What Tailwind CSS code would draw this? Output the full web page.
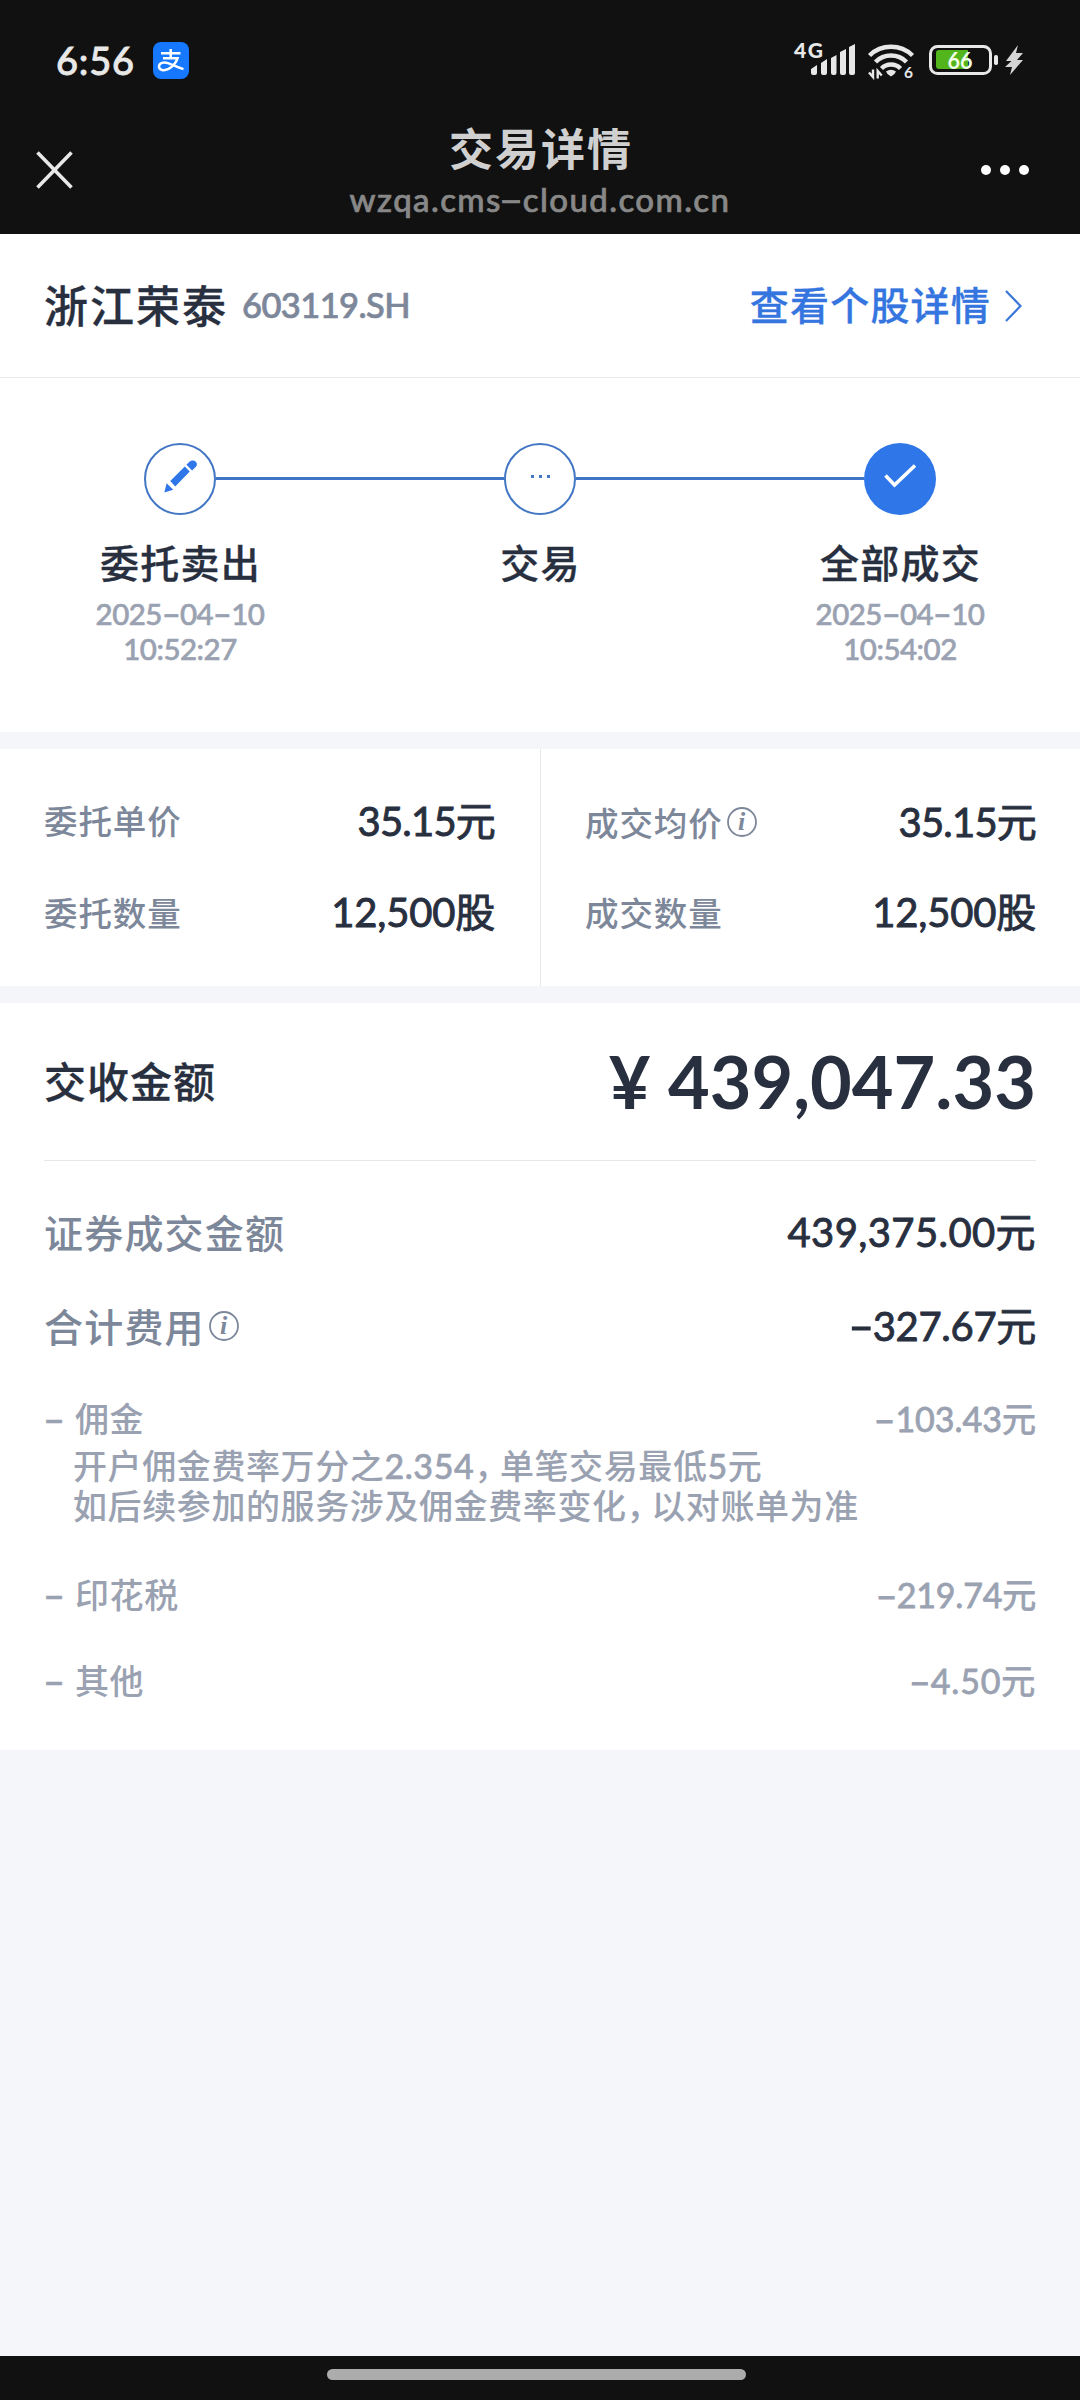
<!DOCTYPE html>
<html lang="zh-CN">
<head>
<meta charset="utf-8">
<title>交易详情</title>
<script src="https://cdn.jsdelivr.net/npm/@tailwindcss/browser@4"></script>
</head>
<body class="bg-[#f4f6fa]">
<div class="w-[1080px] h-[2400px] flex flex-col overflow-hidden bg-[#f4f6fa] text-[#282f3f] font-medium font-['Lato','Noto_Sans_CJK_SC',sans-serif] whitespace-nowrap">

  <header class="h-[234px] bg-[#111111] flex flex-col shrink-0">
    <div class="h-[121px] pl-[56px] pr-[56px] flex items-center justify-between">
      <div class="flex items-center gap-[19px]">
        <span class="text-[38px] leading-none text-[#e8e8e8] w-[78px] tracking-[0.800px] pb-[2px] [-webkit-text-stroke:0.800px]">6:56</span>
        <svg width="36" height="37" viewBox="0 0 36 37">
          <rect width="36" height="37" rx="8" fill="#1677ff"/>
          <path d="M8 11.300h19.500M17.700 7v9.500M10 16.300h14.500c-1.500 4.500-5 8.300-9 10.600-4.500 2.300-9.500 1.200-9.500-2.400 0-4 5-4.600 9-3.400 4.800 1.600 9.500 4.600 15.500 6" fill="none" stroke="#fff" stroke-width="2.500"/>
        </svg>
      </div>
      <svg width="236" height="60" viewBox="788 31 236 60" fill="#e8e8e8">
        <text x="794" y="58" font-size="21" font-weight="900" textLength="29">4G</text>
        <path d="M811 75v-4l6-4v8q0 2-2 2h-2q-2 0-2-2zM821 75V65l6-4v14q0 2-2 2h-2q-2 0-2-2zM831 75V60l5.500-3v18q0 2-2 2h-1.500q-2 0-2-2zM840 75V54l6-3v24q0 2-2 2h-2q-2 0-2-2zM849 75V49l6-3v29q0 2-2 2h-2q-2 0-2-2z" transform="translate(0 -2)"/>
        <g fill="none" stroke="#e8e8e8" stroke-width="4.500">
          <path d="M869.500 55.500a31 31 0 0 1 43 0M875.500 62a22 22 0 0 1 31 0M881.500 68.500a13.500 13.500 0 0 1 19 0"/>
        </g>
        <path d="M886 71.500q5-3.500 10 0-1 3-5 5-4-2-5-5z"/>
        <path d="M873 69.500v7.500l-4-4.500M877.700 78.500v-7.500l4 4.500" fill="none" stroke="#e8e8e8" stroke-width="2.400"/>
        <text x="904" y="77.500" font-size="15.500" font-weight="700">6</text>
        <rect x="930.500" y="46.500" width="60" height="27" rx="7" fill="none" stroke="#e8e8e8" stroke-width="3"/>
        <path d="M939 50h29v19h-29q-3 0-3-3V53q0-3 3-3z" fill="#52b51c"/>
        <text x="947.500" y="69" font-size="23.500" font-weight="700" fill="#f2ffe9" textLength="25" lengthAdjust="spacingAndGlyphs">66</text>
        <rect x="994" y="55" width="4" height="10" rx="1.800"/>
        <path d="M1018 45l-12 16h5.500l-6.500 6h7l-2 8 13-15h-6l6-7h-7z" fill="#d5d5d5"/>
      </svg>
    </div>
    <div class="h-[113px] grid grid-cols-[1fr_auto_1fr] pl-[36px] pr-[51px]">
      <svg class="mt-[30px]" width="37" height="38" viewBox="0 0 37 38"><path d="M1.500 1.500l34 35M35.500 1.500l-34 35" stroke="#e8e8e8" stroke-width="3.600"/></svg>
      <div class="flex flex-col items-center pl-[15px]">
        <h1 class="text-[44px] leading-[56px] pl-[2px] tracking-[2px] font-bold text-[#d0d0d0]">交易详情</h1>
        <div class="text-[33px] leading-[44px] tracking-[1.400px] text-[#888888] [-webkit-text-stroke:0.700px]">wzqa.cms<span class="inline-block w-[21px] text-center scale-x-200">-</span>cloud.com.cn</div>
      </div>
      <div class="flex gap-[9px] justify-end items-center h-[98px]">
        <i class="size-[10px] rounded-full bg-white"></i><i class="size-[10px] rounded-full bg-white"></i><i class="size-[10px] rounded-full bg-white"></i>
      </div>
    </div>
  </header>

  <section class="h-[144px] shrink-0 bg-white border-b border-[#e8e8ea] flex items-center justify-between pl-[44px] pr-[58px]">
    <div class="flex items-center gap-[14px]">
      <h2 class="text-[44px] leading-none tracking-[2px] [-webkit-text-stroke:0.300px]">浙江荣泰</h2>
      <span class="text-[34.500px] leading-none tracking-[-0.600px] text-[#7d879a] [-webkit-text-stroke:0.700px]">603119.SH</span>
    </div>
    <a class="flex items-center gap-[14px] text-[#3575e0]">
      <span class="text-[39px] leading-none tracking-[1.200px] [-webkit-text-stroke:0.300px]">查看个股详情</span>
      <svg width="17" height="32" viewBox="0 0 17 32"><path d="M1 1l14.500 15L1 31" fill="none" stroke="#3c78d8" stroke-width="2.200"/></svg>
    </a>
  </section>

  <section class="h-[354px] shrink-0 bg-white pt-[65px]">
    <div class="flex items-center px-[144px]">
      <div class="size-[72px] rounded-full border-2 border-[#4377c4] flex items-center justify-center">
        <svg width="33" height="34" viewBox="86 70 100 102" fill="#2f76e8" class="mb-[7px]"><path d="M87 171l7-28 20 20zM105 136l44-44 15 15-44 46zM154 87l9-9c14-12 30 4 19 16l-11 10z"/></svg>
      </div>
      <div class="flex-1 h-[3px] -mt-px bg-[#3f75c6]"></div>
      <div class="size-[72px] rounded-full border-2 border-[#4377c4] flex items-center justify-center gap-[5px] pb-[6px]">
        <i class="size-[3px] bg-[#4377c4]"></i><i class="size-[3px] bg-[#4377c4]"></i><i class="size-[3px] bg-[#4377c4]"></i>
      </div>
      <div class="flex-1 h-[3px] -mt-px bg-[#3f75c6]"></div>
      <div class="size-[72px] rounded-full bg-[#2f76e8] flex items-center justify-center">
        <svg width="34" height="26" viewBox="0 0 34 26" class="mb-[6px]"><path d="M2.500 12.500l9 9.500L32 2.500" fill="none" stroke="#fff" stroke-width="3.600"/></svg>
      </div>
    </div>
    <div class="grid grid-cols-3 text-center pt-[25px]">
      <div>
        <div class="pl-[1px] text-[39px] leading-[47px] tracking-[1.200px] [-webkit-text-stroke:0.300px]">委托卖出</div>
        <div class="text-[29.500px] leading-[35px] tracking-[-0.500px] text-[#9aa2b2] pt-[9px] [-webkit-text-stroke:0.600px]">2025<span class="inline-block w-[18px] text-center scale-x-175">-</span>04<span class="inline-block w-[18px] text-center scale-x-175">-</span>10<br>10:52:27</div>
      </div>
      <div class="pl-[1px] text-[39px] leading-[47px] tracking-[1.200px] [-webkit-text-stroke:0.300px]">交易</div>
      <div>
        <div class="pl-[1px] text-[39px] leading-[47px] tracking-[1.200px] [-webkit-text-stroke:0.300px]">全部成交</div>
        <div class="text-[29.500px] leading-[35px] tracking-[-0.500px] text-[#9aa2b2] pt-[9px] [-webkit-text-stroke:0.600px]">2025<span class="inline-block w-[18px] text-center scale-x-175">-</span>04<span class="inline-block w-[18px] text-center scale-x-175">-</span>10<br>10:54:02</div>
      </div>
    </div>
  </section>

  <section class="mt-[17px] h-[237px] shrink-0 bg-white grid grid-cols-2">
    <div class="pl-[44px] pr-[45px] pt-[27px]">
      <div class="h-[92px] flex items-center justify-between"><span class="text-[33.500px] leading-none tracking-[0.900px] text-[#7d879a]">委托单价</span><span class="text-[40px] leading-none font-normal tracking-[-0.800px] pb-[3px] [-webkit-text-stroke:0.900px]">35.15元</span></div>
      <div class="h-[92px] flex items-center justify-between"><span class="text-[33.500px] leading-none tracking-[0.900px] text-[#7d879a]">委托数量</span><span class="text-[40px] leading-none font-normal tracking-[-0.200px] pb-[4px] [-webkit-text-stroke:0.900px]">12,500股</span></div>
    </div>
    <div class="border-l border-[#e8e8ea] pl-[44px] pr-[44px] pt-[27px]">
      <div class="h-[92px] pt-[3px] flex items-center justify-between"><span class="flex items-center gap-[4px] text-[33.500px] leading-none tracking-[0.900px] text-[#7d879a]">成交均价<svg width="30" height="30" viewBox="0 0 30 30" class="-mt-[3px]"><circle cx="15" cy="15" r="14" fill="none" stroke="#7d879a" stroke-width="1.800"/><text x="11" y="23" font-family="Liberation Serif" font-style="italic" font-weight="700" font-size="26" fill="#7d879a">i</text></svg></span><span class="text-[40px] leading-none font-normal tracking-[-0.800px] pb-[3px] [-webkit-text-stroke:0.900px]">35.15元</span></div>
      <div class="h-[92px] flex items-center justify-between"><span class="text-[33.500px] leading-none tracking-[0.900px] text-[#7d879a]">成交数量</span><span class="text-[40px] leading-none font-normal tracking-[-0.200px] pb-[4px] [-webkit-text-stroke:0.900px]">12,500股</span></div>
    </div>
  </section>

  <section class="mt-[17px] h-[747px] shrink-0 bg-white px-[44px]">
    <div class="h-[158px] border-b border-[#e8e8ea] flex items-center justify-between">
      <span class="text-[42px] leading-none tracking-[1px] [-webkit-text-stroke:0.300px]">交收金额</span>
      <span class="text-[72px] leading-none font-bold pb-[2px]">¥ 439,047.33</span>
    </div>
    <div class="mt-[25px] h-[94px] flex items-center justify-between">
      <span class="text-[39px] leading-none tracking-[1.200px] text-[#7d879a]">证券成交金额</span>
      <span class="text-[40px] leading-none font-normal tracking-[0.400px] pb-[2px] [-webkit-text-stroke:0.900px]">439,375.00元</span>
    </div>
    <div class="h-[94px] flex items-center justify-between">
      <span class="flex items-center gap-[4px] text-[39px] leading-none tracking-[1.200px] text-[#7d879a]">合计费用<svg width="30" height="30" viewBox="0 0 30 30" class="-mt-[2px]"><circle cx="15" cy="15" r="14" fill="none" stroke="#7d879a" stroke-width="1.800"/><text x="11" y="23" font-family="Liberation Serif" font-style="italic" font-weight="700" font-size="26" fill="#7d879a">i</text></svg></span>
      <span class="text-[40px] leading-none font-normal tracking-[-0.300px] pb-[2px] [-webkit-text-stroke:0.900px]"><span class="inline-block w-[24px] text-center scale-x-175">-</span>327.67元</span>
    </div>
    <div class="text-[#9aa2b2] text-[34px]">
      <div class="h-[72px] pt-[17px] flex items-center justify-between leading-none">
        <span class="tracking-[0.600px]"><span class="inline-block w-[21px] mr-[10px] text-center scale-x-175 [-webkit-text-stroke:0.600px]">-</span>佣金</span>
        <span class="font-normal [-webkit-text-stroke:0.800px]"><span class="inline-block w-[21px] text-center scale-x-175">-</span>103.43元</span>
      </div>
      <p class="pl-[29px] leading-[40px] tracking-[0.600px]">开户佣金费率万分之<span class="[-webkit-text-stroke:0.600px]">2.354</span><span class="mr-[8px] [font-feature-settings:'halt']">，</span>单笔交易最低<span class="[-webkit-text-stroke:0.600px]">5</span>元<br>如后续参加的服务涉及佣金费率变化<span class="mr-[7px] [font-feature-settings:'halt']">，</span>以对账单为准</p>
      <div class="mt-[26px] h-[86px] flex items-center justify-between leading-none">
        <span class="tracking-[0.600px]"><span class="inline-block w-[21px] mr-[10px] text-center scale-x-175 [-webkit-text-stroke:0.600px]">-</span>印花税</span>
        <span class="font-normal tracking-[-0.200px] [-webkit-text-stroke:0.800px]"><span class="inline-block w-[21px] text-center scale-x-175">-</span>219.74元</span>
      </div>
      <div class="h-[86px] flex items-center justify-between leading-none">
        <span class="tracking-[0.600px]"><span class="inline-block w-[21px] mr-[10px] text-center scale-x-175 [-webkit-text-stroke:0.600px]">-</span>其他</span>
        <span class="font-normal tracking-[0.800px] [-webkit-text-stroke:0.800px]"><span class="inline-block w-[21px] text-center scale-x-175">-</span>4.50元</span>
      </div>
    </div>
  </section>

  <footer class="mt-auto h-[44px] shrink-0 bg-[#111111] flex justify-center pt-[13px]">
    <div class="w-[419px] h-[11px] rounded-full bg-[#acacac] -ml-[8px]"></div>
  </footer>
</div>
</body>
</html>
